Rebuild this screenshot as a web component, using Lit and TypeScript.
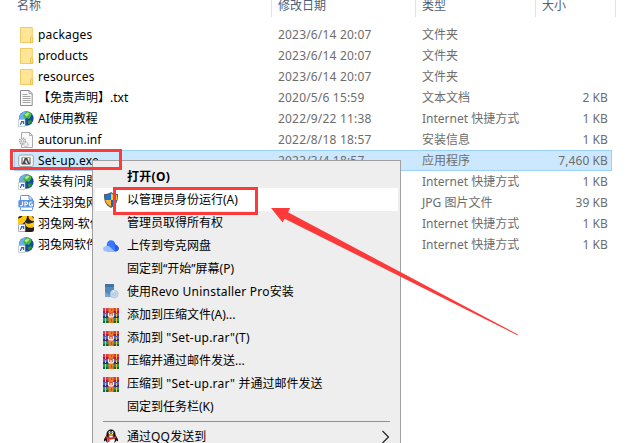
import { LitElement, html, svg, css, nothing, TemplateResult } from "lit";
import { customElement, property } from "lit/decorators.js";
import { classMap } from "lit/directives/class-map.js";

const winrar = svg`
  <path fill="#a51a3c" d="M0 1h16v5H0z"/><path fill="#d8385a" d="M0 1h16v3H0z"/>
  <path fill="#302a80" d="M0 6h16v5H0z"/><path fill="#5960b8" d="M0 6h16v3H0z"/>
  <path fill="#0b6b38" d="M0 11h16v5H0z"/><path fill="#279657" d="M0 11h16v3H0z"/>
  <path fill="#f0c04a" d="M2 1h1v5H2zM2 11h1v5H2zM13 1h1v5h-1zM13 11h1v5h-1zM2 7h1v3H2zM13 7h1v3h-1z"/>
  <path fill="#f07a2c" d="M5.500 1h5v15h-5z"/><path fill="#b9571b" d="M8 2h1v2H8zM8 12h1v3H8z"/>
  <path fill="#d65a34" d="M5 5.500h6v5.500H5z"/>
  <path d="M5.600 6v3l1 1h2.800l1-1V6M8 7v3" stroke="#fff" stroke-width="1.100" fill="none"/>`;

const shortcut = svg`
  <path d="M.5 8.500h6.500v7H.5z" fill="#fff" stroke="#b4bcc6" stroke-width=".7"/>
  <path d="M2.500 14c0-2 .5-2.500 2-2.700M3 10.500h2.600v2.600" fill="none" stroke="#2f66ac" stroke-width="1.100"/>`;

const icons: Record<string, TemplateResult> = {
  folder: svg`
    <path d="M2.500.5h11.800v10h.3v5H2.500z" fill="#fee696" stroke="#efcb62"/>
    <path d="M12.500 15.500v-5.300l1.200-.7 1 1v5z" fill="#ffdf7d" stroke="#e8bd4b" stroke-width=".8"/>`,
  text: svg`
    <path d="M2.500.5h8.700l3 3v12H2.500z" fill="#fbfbfb" stroke="#8c8c8c"/>
    <path d="M11 .5v3.200h3" fill="none" stroke="#8c8c8c" stroke-width=".8"/>
    <path d="M4.500 4.500h5M4.500 6.500h8M4.500 8.500h8M4.500 10.500h8M4.500 12.500h8" stroke="#a2a2a2"/>`,
  inf: svg`
    <path d="M3.500.5h8l3 3v12h-11z" fill="#fafafa" stroke="#aaa"/>
    <path d="M11.500.5v3h3" fill="none" stroke="#aaa"/>
    <circle cx="4.500" cy="9" r="3" fill="#e4e4e4" stroke="#a0a4a9" stroke-dasharray="1.300 .7" stroke-width="1.300"/>
    <circle cx="4.500" cy="9" r="1.200" fill="#fff" stroke="#9298a0" stroke-width=".6"/>
    <circle cx="8" cy="12.500" r="2.300" fill="#eee" stroke="#a7abb0" stroke-dasharray="1.200 .6"/>`,
  globe: svg`
    <circle cx="8.300" cy="7.500" r="7.300" fill="#164a9f"/>
    <path d="M1.200 9A7.300 7.300 0 0 1 8 .3L9 5l-3 5z" fill="#6cb1ee"/>
    <path d="M7 2C9 0 12 .5 13.500 3l-.5 2-2 3-2-1-2 1-2-3z" fill="#47b843"/>
    <path d="M6.500 3.500l3-2 2 1-3 3z" fill="#b7e98f"/>
    <path d="M10 10l3-1 1 1.500-2.500 3-1.500-1z" fill="#2a9332"/>
    ${shortcut}`,
  adobe: svg`
    <rect x=".7" y="2" width="14.700" height="11.500" rx="2" fill="#f6f6f6" stroke="#a3a3a3"/>
    <path d="M3.500 4.500h9v7h-9z" fill="#4c4c4c"/>
    <path d="M4.500 5h2.200l-2.200 5.500zM11.500 5H9.300l2.200 5.500zM8 6.700l1.800 4.300H8.700L8 9.600H7z" fill="#fff"/>`,
  jpg: svg`
    <path d="M2.500 6V1.500c0-.6.400-1 1-1H11l3.500 3.500v2M2.500 12.500v2c0 .6.400 1 1 1h10c.6 0 1-.4 1-1v-2M11 .7v3.500h3.300" fill="none" stroke="#5b93e0"/>
    <rect x=".4" y="5" width="15.700" height="7.600" rx="1.500" fill="#5b93e0"/>
    <path d="M4.500 6.500v3.300q0 1.200-2.300.9M7 11.500v-4.500h1.300q1.500 0 1.500 1.200T8.300 9.500H7M14.300 7.300q-2.800-1-2.800 1.700t2.800 1.700V9.200H13" fill="none" stroke="#fff" stroke-width="1.100"/>`,
  yellow: svg`
    <rect x="0" y="0" width="16" height="16" rx="2.500" fill="#27221c"/>
    <path d="M0 2.500C2 2.500 3.500 1.500 4.500 0H9C9 4 6 8 1 9.500L0 9zM7 6c2 2.500 5 2 9 0v5C12 13 7 11.500 7 6zM10.500 0H14c0 1.300.8 2 2 2v3c-3.500 0-5.500-2-5.500-5z" fill="#ffc817"/>
    ${shortcut}`,
  shield: svg`
    <path d="M8 0c2 1.500 4 2 7 2 .3 6-1 11-7 14C2 13 .7 8 1 2c3 0 5-.5 7-2z" fill="#58616b"/>
    <path d="M8 1.500V8H2.200C2 6.500 2 5 2 3.200 4.500 3.200 6 2.700 8 1.500z" fill="#1678cf"/>
    <path d="M8 1.500V8h5.800c.2-1.500.2-3 .2-4.800-2.500 0-4-.5-6-1.700z" fill="#ffc334"/>
    <path d="M8 8v6.700C5 13 3 11 2.200 8z" fill="#ffb52a"/>
    <path d="M8 8v6.700c3-1.700 5-3.700 5.800-6.700z" fill="#1269ba"/>`,
  cloud: svg`
    <path d="M3.800 7.500C3.500 1 11.500.5 12.300 6.500c4.500 1.500 4.500 7-.3 7H4z" fill="#3978ff"/>
    <path d="M10 2.500c1 4 3 7 2 11 5 0 5-5.500.3-7z" fill="#2758ed"/>
    <path d="M3.500 13.500C-1 13.500-1 8.500 3.500 8 7 7.500 8 10.500 12 13.500z" fill="#9abfff"/>`,
  revo: svg`
    <path d="M2 0h9v12H2z" fill="#5488bd"/><path d="M2 0h9v3H2z" fill="#4173a9"/>
    <path d="M2 8l6 4v1H2z" fill="#7ba5cd"/>
    <circle cx="11.200" cy="10" r="4" fill="#c6d8eb" stroke="#a7c1da" stroke-width=".6"/>
    <path d="M11.200 10l-2-3.500h2z" fill="#fff"/><circle cx="11.200" cy="10" r="1.200" fill="#fff" stroke="#7899bc" stroke-width=".6"/>`,
  rar: winrar,
  qq: svg`
    <path d="M3.500 6C3-1.500 13-1.500 12.500 6c1 2 3 4 2.500 6-.5.700-1.300 0-1.800-.8 0 4-10.400 4-10.400 0C2 12 1.500 12.500 1 12c-.5-2 1.500-4 2.500-6z" fill="#111"/>
    <ellipse cx="8" cy="11" rx="3.800" ry="4" fill="#fff"/>
    <ellipse cx="6.600" cy="3.500" rx="1.100" ry="1.500" fill="#fff"/><ellipse cx="9.400" cy="3.500" rx="1.100" ry="1.500" fill="#fff"/>
    <path d="M6.700 3h.7v1h-.7zM8.700 3h.7v1h-.7z" fill="#111"/>
    <ellipse cx="8" cy="6" rx="2.700" ry=".9" fill="#f7a51c"/>
    <path d="M3 7q5 2.800 10 0l.5 2Q9 11 6.500 10.300V13H4.500V9.800L2.500 9z" fill="#e8202a"/>
    <ellipse cx="5" cy="15.200" rx="2.600" ry="1" fill="#f5a11a"/><ellipse cx="11" cy="15.200" rx="2.600" ry="1" fill="#f5a11a"/>`,
};

const textBase = css`
  :host {
    font: 12px/21px "Noto Sans", "Noto Sans CJK SC", sans-serif;
    white-space: nowrap;
  }
  svg { display: block; flex: none; }
`;

interface FileEntry { icon: string; name: string; date: string; type: string; size: string; selected?: boolean; tight?: boolean; }
interface MenuEntry { label: string; icon?: string; bold?: boolean; hot?: boolean; sub?: boolean; gap?: boolean; }

const link = "Internet 快捷方式";
const files: FileEntry[] = [
  { icon: "folder", name: "packages", date: "2023/6/14 20:07", type: "文件夹", size: "" },
  { icon: "folder", name: "products", date: "2023/6/14 20:07", type: "文件夹", size: "", tight: true },
  { icon: "folder", name: "resources", date: "2023/6/14 20:07", type: "文件夹", size: "" },
  { icon: "text", name: "【免责声明】.txt", date: "2020/5/6 15:59", type: "文本文档", size: "2 KB" },
  { icon: "globe", name: "AI使用教程", date: "2022/9/22 11:38", type: link, size: "1 KB" },
  { icon: "inf", name: "autorun.inf", date: "2022/8/18 18:57", type: "安装信息", size: "1 KB", tight: true },
  { icon: "adobe", name: "Set-up.exe", date: "2023/3/4 18:57", type: "应用程序", size: "7,460 KB", selected: true },
  { icon: "globe", name: "安装有问题", date: "", type: link, size: "1 KB" },
  { icon: "jpg", name: "关注羽兔网", date: "", type: "JPG 图片文件", size: "39 KB" },
  { icon: "yellow", name: "羽兔网-软件", date: "", type: link, size: "1 KB" },
  { icon: "globe", name: "羽兔网软件", date: "", type: link, size: "1 KB" },
];

const menu: MenuEntry[] = [
  { label: "打开(O)", bold: true },
  { label: "以管理员身份运行(A)", icon: "shield", hot: true },
  { label: "管理员取得所有权" },
  { label: "上传到夸克网盘", icon: "cloud" },
  { label: "固定到“开始”屏幕(P)" },
  { label: "使用Revo Uninstaller Pro安装", icon: "revo" },
  { label: "添加到压缩文件(A)...", icon: "rar" },
  { label: '添加到 "Set-up.rar"(T)', icon: "rar" },
  { label: "压缩并通过邮件发送...", icon: "rar" },
  { label: '压缩到 "Set-up.rar" 并通过邮件发送', icon: "rar" },
  { label: "固定到任务栏(K)" },
  { label: "通过QQ发送到", icon: "qq", sub: true, gap: true },
];

/* Runs of Latin letters are set slightly looser than the Chinese text around them. */
const spaced = (text: string) =>
  text.split(/([A-Za-z" .()-]*[A-Za-z]{2}[A-Za-z" .()-]*)/).map((part, i) => (i % 2 ? html`<span class="latin">${part}</span>` : part));

@customElement("app-icon")
class AppIcon extends LitElement {
  @property() name = "";
  static styles = css`
    :host { display: block; width: 16px; height: 16px; flex: none; }
    svg { display: block; overflow: visible; }
  `;
  render() {
    return html`<svg width="16" height="16" viewBox="0 0 16 16">${icons[this.name] ?? nothing}</svg>`;
  }
}

@customElement("file-list")
class FileList extends LitElement {
  static styles = [textBase, css`
    :host { display: block; color: #000; }
    .grid { display: grid; grid-template-columns: 257px 145px 120px 80px; }
    .head { height: 17px; padding: 0 0 7px 14px; color: #4c607a; }
    .head .cell { height: 17px; border-right: 1px solid #e2e2e2; box-sizing: border-box; line-height: 11px; padding-left: 6px; }
    .head .first { border-right: 0; padding-left: 3px; }
    .head .date { border-left: 1px solid #e2e2e2; }
    .row { height: 21px; width: 598px; margin-left: 14px; box-sizing: border-box; }
    .row.selected { background: #cce8ff; box-shadow: inset 0 0 0 1px #99d1ff; }
    .name { display: flex; align-items: center; gap: 4px; padding-left: 4px; height: 21px; }
    .latin { letter-spacing: 0.2px; }
    .latin.tight { letter-spacing: 0; }
    .meta { color: #6d6d6d; padding-left: 6px; }
    .row .date { padding-left: 7px; letter-spacing: 0.18px; }
    .size { color: #6d6d6d; text-align: right; width: 72px; letter-spacing: 0.1px; }
  `];
  render() {
    return html`
      <div class="grid head">
        <div class="cell first">名称</div><div class="cell date">修改日期</div>
        <div class="cell">类型</div><div class="cell">大小</div>
      </div>
      ${files.map((f) => html`
        <div class=${classMap({ grid: true, row: true, selected: !!f.selected })}>
          <div class="name"><app-icon name=${f.icon}></app-icon><span class=${classMap({ latin: /^[\x20-\x7e]+$/.test(f.name), tight: !!f.tight })}>${f.name}</span></div>
          <div class="meta date">${f.date}</div>
          <div class="meta">${f.type}</div>
          <div class="size">${f.size}</div>
        </div>`)}
    `;
  }
}

@customElement("context-menu")
class ContextMenu extends LitElement {
  static styles = [textBase, css`
    :host { display: block; box-sizing: border-box; width: 309px; height: 300px; padding: 4px 2px; background: #eee; border: 1px solid #a0a0a0; color: #000; }
    .item { display: grid; grid-template-columns: 16px 1fr 10px; column-gap: 8px; align-items: center; height: 23px; line-height: 23px; padding: 0 8px; }
    .latin { letter-spacing: 0.22px; }
    .bold { font-weight: 700; letter-spacing: 0.3px; }
    .hot { background: #fff; }
    .rule { height: 1px; margin: 3px 8px; background: #919191; }
  `];
  render() {
    return menu.map((m) => html`
      ${m.gap ? html`<div class="rule"></div>` : nothing}
      <div class=${classMap({ item: true, bold: !!m.bold, hot: !!m.hot })}>
        <app-icon name=${m.icon ?? ""}></app-icon><span>${spaced(m.label)}</span>
        ${m.sub ? html`<svg width="10" height="14" viewBox="0 0 10 14"><path d="M2.500 1l6 6-6 6" fill="none" stroke="#222" stroke-width="1.200"/></svg>` : nothing}
      </div>`);
  }
}

@customElement("app-root")
class AppRoot extends LitElement {
  static styles = css`
    :host { display: block; position: relative; width: 644px; height: 443px; overflow: hidden; background: #fff; }
    context-menu { position: absolute; left: 92px; top: 160px; }
    .mark { position: absolute; box-sizing: border-box; border: 3px solid #fd3a3a; }
    .file { left: 10px; top: 149px; width: 112px; height: 21px; }
    .run { left: 113px; top: 187px; width: 145px; height: 28px; }
    .arrow { position: absolute; left: 271px; top: 208px; }
  `;
  render() {
    return html`
      <file-list></file-list>
      <context-menu></context-menu>
      <div class="mark file"></div>
      <div class="mark run"></div>
      <svg class="arrow" width="248" height="128" viewBox="0 0 248 128">
        <path d="M0 0H19.200L17 4.300L247 126.500L246.500 127.200L13.600 10.700L11.700 14.500Z" fill="#fd3a3a"/>
      </svg>
    `;
  }
}
